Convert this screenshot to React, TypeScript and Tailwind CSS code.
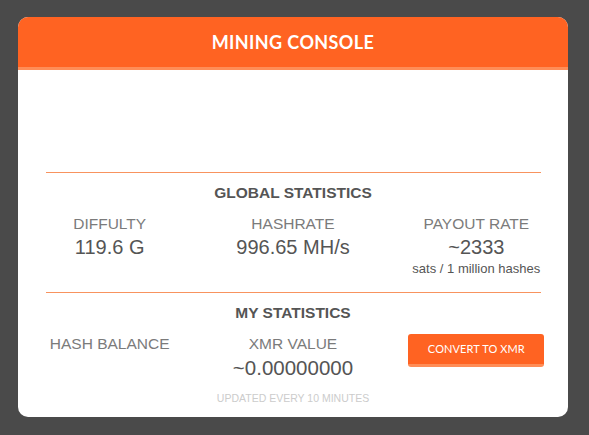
import React from "react";

export default function App() {
  return (
    <div className="h-screen w-full bg-[#4a4a4a] pt-[17px] pl-[18px]">
      <div className="w-[550px] h-[400px] bg-white rounded-[10px] overflow-hidden flex flex-col">
        <div className="h-[53px] shrink-0 bg-[#ff6322] border-b-[3px] border-[#ff8d57] flex items-center justify-center">
          <span className="font-['Lato',sans-serif] font-bold text-[18px] text-white tracking-[0.4px]">
            MINING CONSOLE
          </span>
        </div>

        <div className="mt-[102px] ml-[28px] mr-[27px] h-px bg-[#f8935e]" />

        <div className="font-['Liberation_Sans',Arial,sans-serif]">
          <div className="mt-[10px] text-center text-[15.5px] leading-[20px] font-bold text-[#555]">
            GLOBAL STATISTICS
          </div>
          <div className="mt-[12px] grid grid-cols-3 text-center">
            <div>
              <div className="text-[15.5px] leading-[18px] text-[#7b7b7b]">DIFFULTY</div>
              <div className="mt-[2px] text-[20px] leading-[24px] text-[#555]">119.6 G</div>
            </div>
            <div>
              <div className="text-[15.5px] leading-[18px] text-[#7b7b7b]">HASHRATE</div>
              <div className="mt-[2px] text-[20px] leading-[24px] text-[#555]">996.65 MH/s</div>
            </div>
            <div>
              <div className="text-[15.5px] leading-[18px] text-[#7b7b7b]">PAYOUT RATE</div>
              <div className="mt-[2px] text-[20px] leading-[24px] text-[#555]">~2333</div>
              <div className="mt-[2px] text-[13px] leading-[16px] text-[#555]">sats / 1 million hashes</div>
            </div>
          </div>
        </div>

        <div className="mt-[15px] ml-[28px] mr-[27px] h-px bg-[#f8935e]" />

        <div className="font-['Liberation_Sans',Arial,sans-serif]">
          <div className="mt-[10px] text-center text-[15.5px] leading-[20px] font-bold text-[#555]">
            MY STATISTICS
          </div>
          <div className="mt-[12px] grid grid-cols-3 text-center">
            <div>
              <div className="text-[15.5px] leading-[18px] text-[#7b7b7b]">HASH BALANCE</div>
            </div>
            <div>
              <div className="text-[15.5px] leading-[18px] text-[#7b7b7b]">XMR VALUE</div>
              <div className="mt-[3px] text-[20.5px] leading-[24px] text-[#555]">~0.00000000</div>
            </div>
            <div className="flex justify-center">
              <button className="-mt-[1px] w-[136px] h-[33px] bg-[#ff6322] border-b-[3px] border-[#ff8d57] rounded-[3px] text-white font-['Lato',sans-serif] text-[11px] tracking-[0.1px]">
                CONVERT TO XMR
              </button>
            </div>
          </div>
          <div className="mt-[12px] text-center text-[10.5px] leading-[12px] text-[#cccccc]">
            UPDATED EVERY 10 MINUTES
          </div>
        </div>
      </div>
    </div>
  );
}
